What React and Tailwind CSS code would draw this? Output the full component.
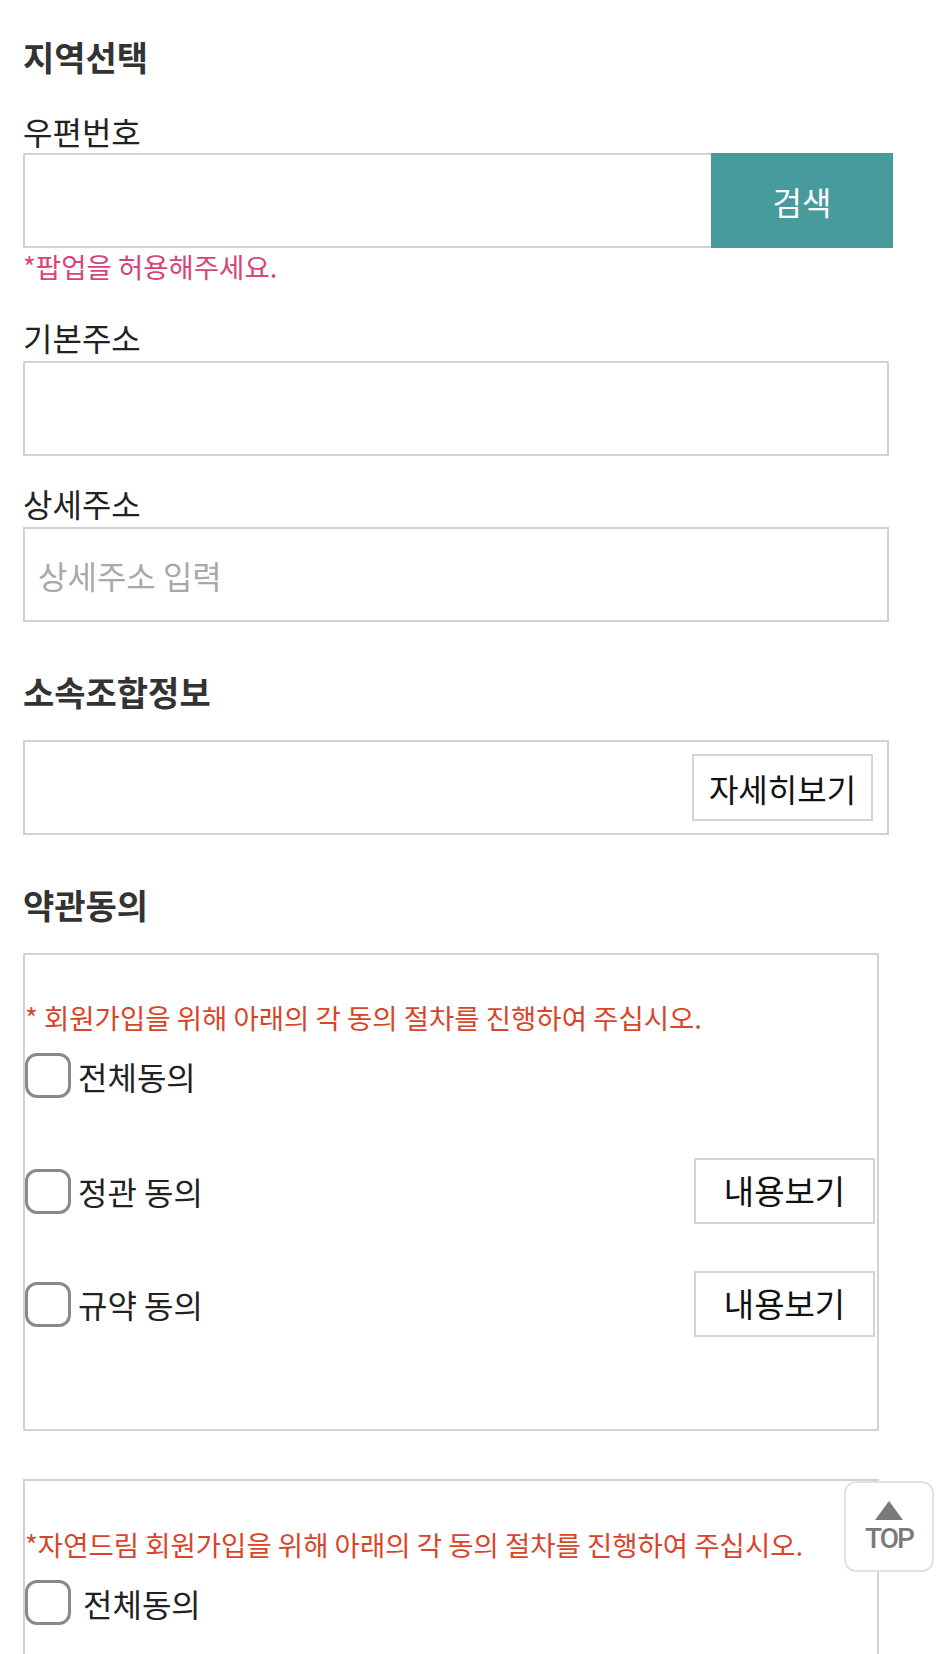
import React from 'react';

const font = { fontFamily: '"Noto Sans CJK KR", "Noto Sans", sans-serif' };

function Label({ children, className = '' }) {
  return <p className={`text-[32px] leading-[40px] text-[#222] ${className}`}>{children}</p>;
}

function Heading({ children, className = '' }) {
  return <h2 className={`text-[34px] leading-[42px] font-bold text-[#333] ${className}`}>{children}</h2>;
}

function Check({ label, gap = 'gap-[7px]' }) {
  return (
    <label className={`flex items-center ${gap}`}>
      <span className="w-[46px] h-[45px] rounded-[12px] border-[3px] border-[#8a8a8a] bg-white shrink-0" />
      <span className="text-[32px] leading-[40px] text-[#222]">{label}</span>
    </label>
  );
}

function ViewButton() {
  return (
    <button className="w-[181px] h-[66px] border-2 border-[#d4d4d4] bg-white text-[33px] text-[#111]">
      내용보기
    </button>
  );
}

export default function App() {
  return (
    <div className="relative h-[1654px] overflow-hidden bg-white pl-[23px] pt-[36px]" style={font}>
      {/* 지역선택 */}
      <Heading>지역선택</Heading>
      <Label className="mt-[33px]">우편번호</Label>
      <div className="mt-[2px] flex w-[870px] h-[95px]">
        <div className="flex-1 border-2 border-r-0 border-[#d2d2d2]" />
        <button className="w-[182px] bg-[#479b9d] text-white text-[32px]">검색</button>
      </div>
      <p className="mt-[3px] text-[27.5px] leading-[30px] text-[#d6447a]">*팝업을 허용해주세요.</p>

      <Label className="mt-[36px]">기본주소</Label>
      <div className="mt-[4px] w-[866px] h-[95px] border-2 border-[#d2d2d2]" />

      <Label className="mt-[27px]">상세주소</Label>
      <div className="mt-[4px] w-[866px] h-[95px] border-2 border-[#d2d2d2] flex items-center px-[13px]">
        <span className="text-[32px] text-[#a9a9a9]">상세주소 입력</span>
      </div>

      {/* 소속조합정보 */}
      <Heading className="mt-[49px]">소속조합정보</Heading>
      <div className="mt-[27px] w-[866px] h-[95px] border-2 border-[#d2d2d2] flex items-center justify-end pr-[14px]">
        <button className="w-[181px] h-[67px] border-2 border-[#d4d4d4] bg-white text-[32px] text-[#111]">
          자세히보기
        </button>
      </div>

      {/* 약관동의 */}
      <Heading className="mt-[49px]">약관동의</Heading>
      <div className="mt-[27px] w-[856px] h-[478px] border-2 border-[#d2d2d2] pt-[47px] pr-[2px]">
        <p className="text-[27.5px] leading-[30px] text-[#d9452b]">* 회원가입을 위해 아래의 각 동의 절차를 진행하여 주십시오.</p>
        <div className="mt-[21px]">
          <Check label="전체동의" />
        </div>
        <div className="mt-[60px] flex items-center justify-between">
          <Check label="정관 동의" />
          <ViewButton />
        </div>
        <div className="mt-[47px] flex items-center justify-between">
          <Check label="규약 동의" />
          <ViewButton />
        </div>
      </div>

      <div className="mt-[48px] w-[856px] h-[300px] border-2 border-[#d2d2d2] pt-[48px]">
        <p className="text-[27.5px] leading-[30px] text-[#d9452b]">*자연드림 회원가입을 위해 아래의 각 동의 절차를 진행하여 주십시오.</p>
        <div className="mt-[21px]">
          <Check label="전체동의" gap="gap-[12px]" />
        </div>
      </div>

      {/* TOP button */}
      <button className="absolute left-[844px] top-[1481px] w-[90px] h-[91px] rounded-[12px] border-2 border-[#e2e2e2] bg-white flex flex-col items-center justify-center">
        <svg width="28" height="19" viewBox="0 0 28 19">
          <polygon points="14,0 28,19 0,19" fill="#7a7a7a" />
        </svg>
        <span className="mt-[5px] text-[28px] leading-[28px] font-medium text-[#7a7a7a]" style={{ fontFamily: '"Roboto", "Liberation Sans", sans-serif', letterSpacing: '-2px' }}>
          TOP
        </span>
      </button>
    </div>
  );
}
